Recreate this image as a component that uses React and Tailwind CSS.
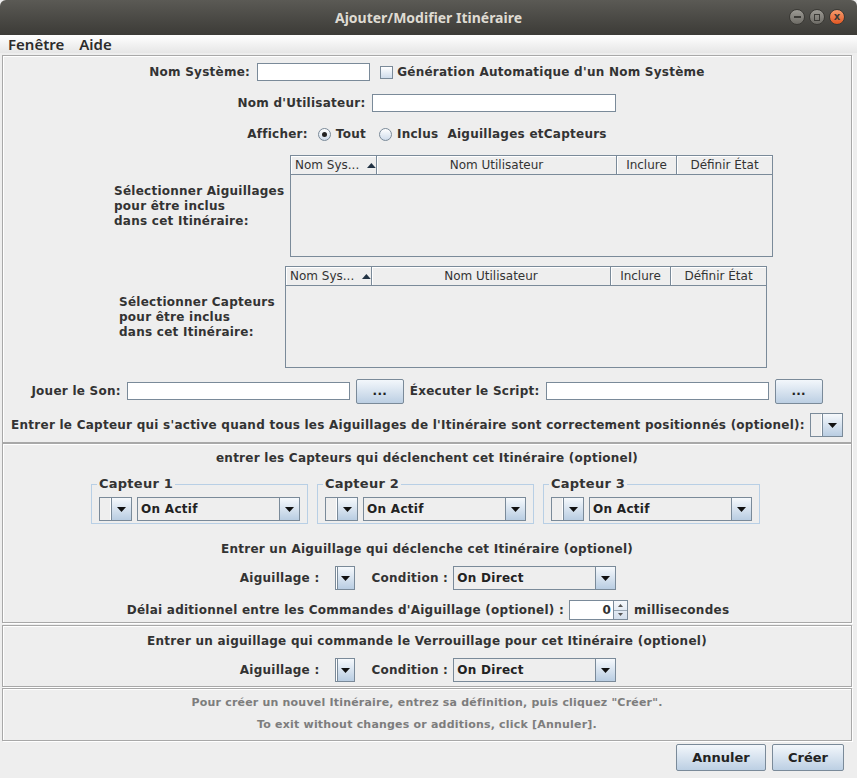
import React from 'react';

const Arrow = () => (
    <svg width="9" height="5" viewBox="0 0 9 5">
        <polygon points="0,0 9,0 4.5,5" fill="#111" />
    </svg>
);

const ArrowBtn = () => (
    <div className="w-[20px] h-full flex items-center justify-center border-l border-[#7a8a99] bg-linear-to-b from-[#f6f9fc] to-[#b9cde2]">
        <Arrow />
    </div>
);

const Combo = ({ className = '', label = '', boxClass = 'w-[11px]' }) => (
    <div className={`flex h-[24px] border border-[#7a8a99] bg-[#eeeeee] ${className}`}>
        {label ? (
            <div className="flex-1 flex items-center pl-[3px] font-bold text-[12px] tracking-[0.3px] text-[#222]">{label}</div>
        ) : (
            <div className={`${boxClass} border-r border-white`} />
        )}
        <ArrowBtn />
    </div>
);

const TextField = ({ className = '' }) => (
    <div className={`h-[18px] bg-white border border-[#7a8a99] shadow-[inset_1px_1px_0_#ffffff] ${className}`} />
);

const Button = ({ children, className = '' }) => (
    <div className={`flex items-center justify-center border border-[#7a8a99] rounded-[2px] bg-linear-to-b from-[#f3f7fb] to-[#bccfe3] font-bold text-[#222] ${className}`}>
        {children}
    </div>
);

const Radio = ({ checked }) => (
    <div className="w-[13px] h-[13px] rounded-full border border-[#7a8a99] bg-linear-to-b from-white to-[#cfdceb] flex items-center justify-center">
        {checked && <div className="w-[5px] h-[5px] rounded-full bg-[#222]" />}
    </div>
);

const Table = ({ className = '' }) => (
    <div className={`h-[102px] border border-[#7a8a99] bg-[#eeeeee] flex flex-col ${className}`}>
        <div className="flex h-[19px] border-b border-[#7a8a99] text-[12px] font-normal tracking-normal text-[#333] whitespace-nowrap">
            <div className="w-[86px] flex items-center pl-[4px] border-r border-[#7a8a99] shadow-[inset_1px_1px_0_#ffffff]">
                Nom Sys...
                <svg className="ml-[8px]" width="9" height="5" viewBox="0 0 9 5"><polygon points="0,5 9,5 4.5,0" fill="#223344" /></svg>
            </div>
            <div className="flex-1 flex items-center justify-center border-r border-[#7a8a99] shadow-[inset_1px_1px_0_#ffffff]">Nom Utilisateur</div>
            <div className="w-[60px] flex items-center justify-center border-r border-[#7a8a99] shadow-[inset_1px_1px_0_#ffffff]">Inclure</div>
            <div className="w-[95px] flex items-center justify-center shadow-[inset_1px_1px_0_#ffffff]">Définir État</div>
        </div>
        <div className="flex-1" />
    </div>
);

const Etched = ({ children, className = '' }) => (
    <div className={`border border-[#a8a8a8] shadow-[inset_1px_1px_0_#ffffff,1px_1px_0_#ffffff] ${className}`}>
        {children}
    </div>
);

const CapteurBox = ({ n }) => (
    <fieldset className="w-[216px] h-[47px] border border-[#b8cfe5] px-[7px] flex items-start">
        <legend className="ml-[-2px] px-[2px] font-bold text-[13px] text-[#333] leading-[14px]">Capteur {n}</legend>
        <div className="flex gap-[5px] mt-[6px]">
            <Combo className="w-[33px]" />
            <Combo className="w-[163px]" label="On Actif" />
        </div>
    </fieldset>
);

const TriggerRow = () => (
    <div className="flex items-center justify-center h-[24px] text-[12px] tracking-[0.25px] font-bold text-[#333]">
        <span>Aiguillage :</span>
        <Combo className="w-[20px] ml-[15px]" boxClass="w-[0px]" />
        <span className="ml-[17px]">Condition :</span>
        <Combo className="w-[163px] ml-[5px] bg-[#eeeeee]" label="On Direct" />
    </div>
);

export default function App() {
    return (
        <div className="w-[857px] h-[778px] flex flex-col bg-[#eeeeee] overflow-hidden" style={{ fontFamily: '"DejaVu Sans", sans-serif' }}>
            {/* barre de titre */}
            <div className="h-[35px] flex items-center relative rounded-t-[6px] bg-linear-to-b from-[#5b5a55] to-[#3c3b37]">
                <div className="flex-1 text-center text-[14px] font-bold text-[#dfdbd2]" style={{ fontFamily: '"Noto Sans", sans-serif' }}>
                    Ajouter/Modifier Itinéraire
                </div>
                <div className="absolute right-[12px] top-[9px] flex gap-[4px]">
                    <div className="w-[16px] h-[16px] rounded-full bg-linear-to-b from-[#9c9a94] to-[#6e6c66] border border-[#3a3935] flex items-center justify-center">
                        <div className="w-[7px] h-[2px] bg-[#3c3b37]" />
                    </div>
                    <div className="w-[16px] h-[16px] rounded-full bg-linear-to-b from-[#9c9a94] to-[#6e6c66] border border-[#3a3935] flex items-center justify-center">
                        <div className="w-[6px] h-[7px] border border-[#3c3b37]" />
                    </div>
                    <div className="w-[16px] h-[16px] rounded-full bg-linear-to-b from-[#f59b6c] to-[#e2561f] border border-[#3a3935] flex items-center justify-center text-[10px] leading-none text-[#3c3b37] font-bold">
                        x
                    </div>
                </div>
            </div>

            {/* menu */}
            <div className="h-[18px] flex items-center gap-[15px] pl-[8px] bg-linear-to-b from-white to-[#e6e6e6] text-[15px] font-semibold text-[#2c2c2c]" style={{ fontFamily: '"Noto Sans", sans-serif' }}>
                <span>Fenêtre</span>
                <span>Aide</span>
            </div>

            <div className="flex-1 flex flex-col pl-[2px] pr-[5px] pt-[2px]">
                {/* panneau principal */}
                <Etched className="h-[388px] flex flex-col text-[#333] text-[12px] tracking-[0.25px] font-bold">
                    <div className="flex items-center justify-center h-[20px] mt-[6px]">
                        <span>Nom Système:</span>
                        <TextField className="w-[113px] ml-[7px]" />
                        <div className="w-[13px] h-[13px] ml-[10px] border border-[#7a8a99] bg-linear-to-b from-white to-[#cfdceb]" />
                        <span className="ml-[4px]">Génération Automatique d'un Nom Système</span>
                    </div>
                    <div className="flex items-center justify-center h-[20px] mt-[11px]">
                        <span>Nom d'Utilisateur:</span>
                        <TextField className="w-[244px] ml-[7px]" />
                    </div>
                    <div className="flex items-center justify-center h-[20px] mt-[11px]">
                        <span>Afficher:</span>
                        <div className="ml-[10px]"><Radio checked /></div>
                        <span className="ml-[5px]">Tout</span>
                        <div className="ml-[13px]"><Radio /></div>
                        <span className="ml-[5px]">Inclus</span>
                        <span className="ml-[9px]">Aiguillages etCapteurs</span>
                    </div>
                    <div className="flex items-center h-[102px] mt-[11px] pl-[111px]">
                        <div className="w-[176px] leading-[15px]">
                            Sélectionner Aiguillages<br />pour être inclus<br />dans cet Itinéraire:
                        </div>
                        <Table className="w-[483px]" />
                    </div>
                    <div className="flex items-center h-[102px] mt-[9px] pl-[116px]">
                        <div className="w-[166px] leading-[15px]">
                            Sélectionner Capteurs<br />pour être inclus<br />dans cet Itinéraire:
                        </div>
                        <Table className="w-[482px]" />
                    </div>
                    <div className="flex items-center justify-center h-[24px] mt-[11px]">
                        <span>Jouer le Son:</span>
                        <TextField className="w-[223px] ml-[6px]" />
                        <Button className="w-[48px] h-[25px] ml-[6px] text-[12px]">...</Button>
                        <span className="ml-[6px]">Éxecuter le Script:</span>
                        <TextField className="w-[223px] ml-[6px]" />
                        <Button className="w-[48px] h-[25px] ml-[6px] text-[12px]">...</Button>
                    </div>
                    <div className="flex items-center justify-center h-[24px] mt-[10px]">
                        <span>Entrer le Capteur qui s'active quand tous les Aiguillages de l'Itinéraire sont correctement positionnés (optionel):</span>
                        <Combo className="w-[33px] ml-[5px]" />
                    </div>
                </Etched>

                {/* capteurs */}
                <Etched className="h-[180px] flex flex-col items-center text-[#333] text-[12px] tracking-[0.25px] font-bold">
                    <div className="h-[14px] mt-[7px] leading-[14px]">entrer les Capteurs qui déclenchent cet Itinéraire (optionel)</div>
                    <div className="flex gap-[9px] mt-[12px] pr-[3px]">
                        <CapteurBox n={1} />
                        <CapteurBox n={2} />
                        <CapteurBox n={3} />
                    </div>
                    <div className="h-[14px] mt-[18px] leading-[14px]">Entrer un Aiguillage qui déclenche cet Itinéraire (optionel)</div>
                    <div className="mt-[10px] pl-[2px]"><TriggerRow /></div>
                    <div className="flex items-center h-[20px] mt-[10px] pl-[2px]">
                        <span>Délai aditionnel entre les Commandes d'Aiguillage (optionel) :</span>
                        <div className="flex h-[20px] ml-[5px] border border-[#7a8a99] bg-white">
                            <div className="w-[43px] text-right pr-[2px] leading-[18px]">0</div>
                            <div className="w-[14px] flex flex-col border-l border-[#7a8a99] bg-linear-to-b from-[#f6f9fc] to-[#d2deeb]">
                                <div className="flex-1 flex items-center justify-center border-b border-[#9aa8b5]">
                                    <svg width="5" height="3" viewBox="0 0 5 3"><polygon points="0,3 5,3 2.5,0" fill="#555" /></svg>
                                </div>
                                <div className="flex-1 flex items-center justify-center">
                                    <svg width="5" height="3" viewBox="0 0 5 3"><polygon points="0,0 5,0 2.5,3" fill="#555" /></svg>
                                </div>
                            </div>
                        </div>
                        <span className="ml-[6px]">millisecondes</span>
                    </div>
                </Etched>

                {/* verrouillage */}
                <Etched className="h-[62px] mt-[2px] flex flex-col items-center text-[#333] text-[12px] tracking-[0.25px] font-bold">
                    <div className="h-[14px] mt-[8px] leading-[14px]">Entrer un aiguillage qui commande le Verrouillage pour cet Itinéraire (optionel)</div>
                    <div className="mt-[10px] pl-[2px]"><TriggerRow /></div>
                </Etched>

                {/* notes */}
                <Etched className="h-[53px] mt-[1px] flex flex-col items-center text-[11px] tracking-[0.2px] font-bold text-[#7d7d7d]">
                    <div className="mt-[7px] leading-[14px]">Pour créer un nouvel Itinéraire, entrez sa définition, puis cliquez "Créer".</div>
                    <div className="mt-[8px] leading-[14px]">To exit without changes or additions, click [Annuler].</div>
                </Etched>

                <div className="flex justify-end gap-[6px] mt-[3px] pr-[8px]">
                    <Button className="w-[90px] h-[27px] text-[13px]">Annuler</Button>
                    <Button className="w-[72px] h-[27px] text-[13px]">Créer</Button>
                </div>
            </div>
        </div>
    );
}
